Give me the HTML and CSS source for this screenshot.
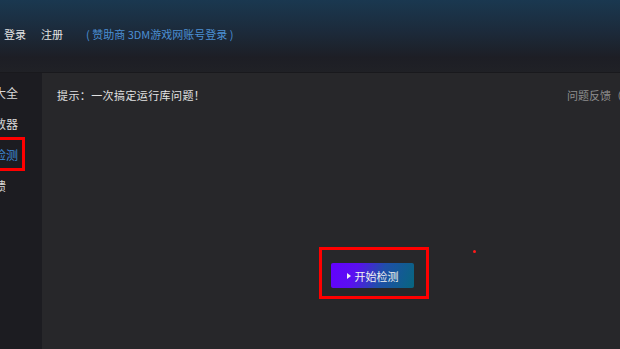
FILE: index.html
```html
<!DOCTYPE html>
<html lang="zh-CN">

<head>
    <meta charset="UTF-8">
    <meta name="viewport" content="width=device-width, initial-scale=1.0">
    <title>运行库检测</title>
    <link rel="stylesheet" href="styles.css">
</head>

<body>

    <div class="app">
        <!-- Top bar -->
        <div class="header">
            <div class="account">
                <a class="account-link">登录</a>
                <a class="account-link">注册</a>
                <a class="sponsor-link">( 赞助商 3DM游戏网账号登录 )</a>
            </div>
        </div>

        <div class="body">
            <!-- Side menu -->
            <div class="sidebar">
                <ul class="side-list">
                    <li>运行库大全</li>
                    <li>游戏帧数器</li>
                    <li class="active">运行库检测<span class="mark"></span></li>
                    <li>问题反馈</li>
                </ul>
            </div>

            <!-- Main panel -->
            <div class="main">
                <div class="tip-row">
                    <span class="tip">提示：一次搞定运行库问题！</span>
                    <span class="feedback">问题反馈（客服）</span>
                </div>

                <div class="start-area">
                    <button class="start-btn"><span class="arrow"></span>开始检测</button>
                    <span class="mark btn-mark"></span>
                </div>

                <span class="dot"></span>
            </div>
        </div>
    </div>

</body>

</html>
```

FILE: styles.css
```css
/* General Styles */
body {
    margin: 0;
    padding: 0;
    font-family: "Noto Sans CJK SC", "Noto Sans", sans-serif;
    background-color: #27272a;
    overflow: hidden;
}

.app {
    width: 620px;
    height: 349px;
    display: flex;
    flex-direction: column;
    overflow: hidden;
}

/* Header */
.header {
    height: 72px;
    flex-shrink: 0;
    background: linear-gradient(to bottom, #1a3850 0%, #1c2a3a 45%, #1d1e25 80%, #202126 100%);
    border-bottom: 1px solid #19191d;
    display: flex;
    align-items: center;
}

.account {
    display: flex;
    align-items: center;
    padding-left: 4px;
    margin-bottom: 5px;
    font-size: 11px;
}

.account-link {
    color: #e4e4e4;
    margin-right: 15px;
}

.sponsor-link {
    color: #4b8fd3;
    margin-left: 8px;
}

/* Body */
.body {
    flex: 1;
    display: flex;
}

.sidebar {
    width: 42px;
    flex-shrink: 0;
    background-color: #1c1c21;
    overflow: hidden;
}

.side-list {
    list-style: none;
    margin: 0 0 0 -42px;
    padding: 4px 0 0 0;
    width: 84px;
}

.side-list li {
    position: relative;
    height: 31px;
    line-height: 31px;
    font-size: 12px;
    color: #d8d8d8;
    white-space: nowrap;
}

.side-list li.active {
    color: #3f8ad6;
}

.mark {
    position: absolute;
    border: 3px solid #ff0000;
}

.side-list .mark {
    top: -2px;
    bottom: -1px;
    left: -6px;
    right: 17px;
}

/* Main panel */
.main {
    flex: 1;
    position: relative;
    background-color: #27272a;
}

.tip-row {
    display: flex;
    align-items: center;
    height: 43px;
    padding-left: 15px;
    font-size: 11px;
    white-space: nowrap;
}

.tip {
    color: #e2e2e2;
    letter-spacing: 0.4px;
}

.feedback {
    margin-left: auto;
    margin-right: -35px;
    color: #8e8e8e;
}

.start-area {
    position: relative;
    width: 83px;
    margin: 147px 0 0 289px;
}

.start-btn {
    display: flex;
    align-items: center;
    justify-content: center;
    width: 83px;
    height: 25px;
    padding: 0;
    border: none;
    border-radius: 2px;
    background: linear-gradient(110deg, #6400ff 0%, #5a10f0 30%, #1f4fa8 60%, #07667f 100%);
    color: #f2f2f2;
    font-family: "Noto Sans CJK SC", sans-serif;
    font-size: 11px;
    cursor: pointer;
}

.arrow {
    width: 0;
    height: 0;
    border-top: 3px solid transparent;
    border-bottom: 3px solid transparent;
    border-left: 4px solid #f2f2f2;
    margin-right: 4px;
}

.btn-mark {
    top: -16px;
    left: -12px;
    right: -15px;
    bottom: -11px;
}

.dot {
    position: absolute;
    left: 431px;
    top: 177px;
    width: 3px;
    height: 3px;
    border-radius: 50%;
    background-color: #ff1a1a;
}
```
